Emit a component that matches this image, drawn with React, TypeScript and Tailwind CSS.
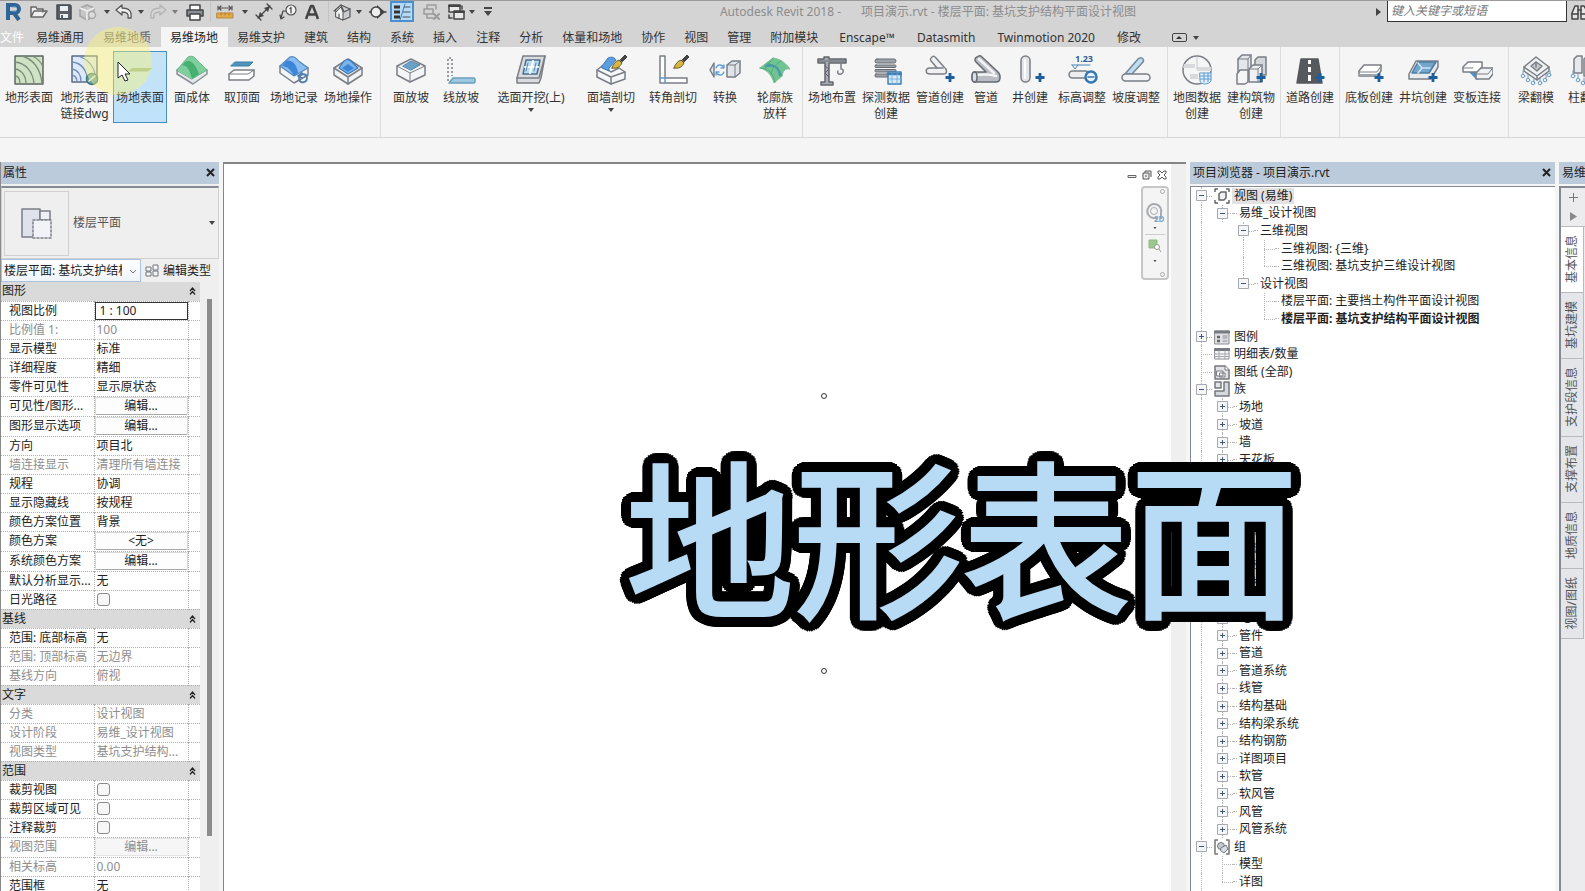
import type { ReactNode } from "react";
import clsx from "clsx";

type TreeRow = {
  level: number;
  label: string;
  state?: "open" | "closed";
  icon?: ReactNode;
  bold?: boolean;
  selected?: boolean;
  last?: boolean;
  rails?: number[];
};

type PropRow = {
  label: string;
  value?: string;
  kind?: "text" | "button" | "check" | "input";
  muted?: boolean;
};

const Svg = ({ size = 32, children }: { size?: number; children: ReactNode }) => (
  <svg
    width={size}
    height={size}
    viewBox={`0 0 ${size} ${size}`}
    fill="none"
    stroke="#7a7f86"
    strokeWidth="1.500"
    strokeLinejoin="round"
    strokeLinecap="round"
    className="shrink-0"
  >
    {children}
  </svg>
);

const Plus = () => (
  <path d="M26 19v9M21.500 23.500h9" stroke="#1d5f9c" strokeWidth="2.800" strokeLinecap="butt" />
);

const Brush = () => (
  <g strokeWidth="1">
    <path d="M17 14c1-4 4-7 7-8l3 3c-2 4-5 6-10 5z" fill="#d9b544" stroke="#6d5c22" />
    <path d="M25 6l5-5 2 2-5 5z" fill="#444" stroke="#444" />
  </g>
);

/* ribbon icons, 32px grid */

const TerrainIcon = () => (
  <Svg>
    <path d="M2 2h28v28H2z" fill="#cfe3c4" stroke="#5d6660" />
    <path d="M9 2c11 3 19 13 20 28M2 8c11 1 18 10 19 22M2 15c7 1 11 7 11 15M2 22c4 0 5 4 5 8M19 2c5 2 9 6 11 11" stroke="#7c8b7a" strokeWidth="1.300" />
  </Svg>
);

const TerrainLinkIcon = () => (
  <Svg>
    <path d="M3 2h25v26H3z" fill="#dbe9fa" stroke="#5d6a80" />
    <path d="M9 2c10 3 17 11 18 24M3 8c10 1 15 9 16 20M3 15c6 1 9 6 9 13M3 21c4 1 5 4 5 7" stroke="#728bb5" strokeWidth="1.300" />
    <circle cx="23" cy="25" r="5.500" fill="#66a0a8" stroke="#3f7780" />
    <path d="M20 27l6-5" stroke="#e4f3f3" />
  </Svg>
);

const SiteSurfaceIcon = () => (
  <Svg>
    <path d="M4 17.500h20l4-3.500H8z" fill="#8fb495" stroke="none" />
  </Svg>
);

const SolidIcon = () => (
  <Svg>
    <path d="M1 16l15-9 15 9v4L17 30 1 20z" fill="#e6e8ea" stroke="#8a9095" />
    <path d="M1 16L12 3c6-3 8 3 13 7l6 6-15 9z" fill="#7fcf9c" stroke="#6bb78a" strokeWidth="1" />
    <path d="M9 8c5-3 10 1 14 12l-7 5C13 15 12 12 6 11z" fill="#46b072" stroke="none" />
  </Svg>
);

const TopFaceIcon = () => (
  <Svg>
    <path d="M5 12h18l4-4H9z" fill="#4f93bb" stroke="#3b7ea6" strokeWidth="1" />
    <path d="M3 20l5-4h20v6l-5 4H3z" fill="#fff" />
    <path d="M3 20h19l6-4" fill="none" strokeWidth="1" />
  </Svg>
);

const SiteLogIcon = () => (
  <Svg>
    <path d="M2 12v7l14 10 14-8v-7L16 6z" fill="#f3f5f7" />
    <path d="M2 12L12 3c6-2 6 3 10 5l8 6-14 8z" fill="#8cbdf0" stroke="#5487bb" strokeWidth="1.200" />
    <path d="M8 7c6-2 11 4 12 12l-4 3C12 15 10 13 4 12z" fill="#3c86d8" stroke="none" />
    <path d="M21 24c1-5 8-5 8 0s-7 6-8 1M24 19l-4 3 4 2" stroke="#4f7fae" strokeWidth="1.800" />
  </Svg>
);

const SiteOpIcon = () => (
  <Svg>
    <path d="M2 14l14-9 14 9v7l-14 9-14-9z" fill="#f1f3f5" />
    <path d="M2 14l14 9 14-9M16 23v7" />
    <path d="M7 14l5-7c4-3 6-1 8 1l6 6-10 6z" fill="#7cb5ee" stroke="#3c77b5" strokeWidth="1.200" />
    <path d="M10 14l6-4 6 4-6 4z" fill="#3c86d8" stroke="none" />
  </Svg>
);

const FaceSlopeIcon = () => (
  <Svg>
    <path d="M2 12l14-7 14 7v9l-15 7-13-7z" fill="#f4f5f7" />
    <path d="M2 12l13 7 15-7M15 19v9" strokeWidth="1" />
    <path d="M8 12l8-5 9 4-9 5z" fill="#6ba3c8" stroke="#5282a3" strokeWidth="1" />
  </Svg>
);

const LineSlopeIcon = () => (
  <Svg>
    <path d="M3 27V4h4v18" strokeDasharray="2 2" strokeLinecap="butt" />
    <path d="M4 29l4-5h21l1 1v3l-1 1z" fill="#9dc9df" stroke="#6a9fbd" />
  </Svg>
);

const ExcavateIcon = () => (
  <Svg>
    <path d="M8 2h22l-4 22-2 5H2v-5z" fill="#d9dbde" />
    <path d="M2 24h22l6-22" />
    <path d="M11 6h14l-3 14H8z" fill="#b9dcf0" stroke="#4d6f8c" />
    <path d="M18 7l-3 12M10 13h13" stroke="#fff" strokeWidth="2" />
    <path d="M13 9l-2 8M21 9l-2 8" stroke="#4d88b5" strokeWidth="1" />
  </Svg>
);

const WallCutIcon = () => (
  <Svg>
    <path d="M2 16l5-4 9 6 8-4 6 4v7l-14 5-14-7z" fill="#f6f7f9" />
    <path d="M7 12l6-8c4-2 7 0 8 2l-7 8v3l-7-3z" fill="#5a9ee0" stroke="#3c77b5" strokeWidth="1" />
    <path d="M2 16l14 7 14-5M16 23v7" />
    <Brush />
  </Svg>
);

const CornerCutIcon = () => (
  <Svg>
    <path d="M3 2h5v22h22v5H3z" fill="#fff" />
    <path d="M8 24H3M8 24v5" stroke="#5c9bd6" />
    <Brush />
  </Svg>
);

const ConvertIcon = () => (
  <Svg>
    <path d="M5 9L1 16l4 7z" fill="#e3e6ea" />
    <path d="M7 14c2-5 7-3 8 0M15 18c-2 5-7 3-8 0M15 11v3h-3M7 21v-3h3" stroke="#5d9edb" strokeWidth="1.300" />
    <path d="M18 11l5-4h8v12l-5 4h-8z" fill="#e1e4e9" />
    <path d="M18 11h8v12M26 11l5-4" strokeWidth="1" />
  </Svg>
);

const LoftIcon = () => (
  <Svg>
    <path d="M1 14L14 4c6 1 11 3 17 11-5-1-7 2-8 7l-8 7C13 22 9 16 1 14z" fill="#6fc492" stroke="#7dbf97" strokeWidth="1" />
    <path d="M2 14c8 1 12 5 14 14M8 9c8 2 13 6 15 13M14 4c-2 5-7 5-8 11M22 7c-6 4-9 7-10 13" stroke="#4fae79" strokeWidth="1" />
    <path d="M7 12c7-2 13 1 14 9" stroke="#4c9aa8" strokeWidth="2.500" />
  </Svg>
);

const CraneIcon = () => (
  <Svg>
    <path d="M2 5h6V3h5v2h17v4H13v19h4v3H5v-3h4V9H2z" fill="#a8adb3" stroke="#61666c" />
    <path d="M9 12l4 3-4 4 4 4M3 7h26" stroke="#61666c" strokeWidth="1" />
    <path d="M25 9v6c3 0 3 4 0 5s-4-2-3-3" />
  </Svg>
);

const DetectIcon = () => (
  <Svg>
    <g fill="#9ea3a9" stroke="#676c72" strokeWidth="1">
      <rect x="5" y="5" width="21" height="4" rx="2" />
      <rect x="5" y="11" width="21" height="2.500" rx="1" />
      <rect x="5" y="15.500" width="21" height="2.500" rx="1" />
      <rect x="5" y="20" width="16" height="3" rx="1" />
    </g>
    <path d="M18 18h13v12H18z" fill="#d7ebfb" stroke="#3f7fb5" />
    <path d="M18 20h13" stroke="#3f7fb5" strokeWidth="2.500" />
    <path d="M18 25h13M22 20v10M27 20v10" stroke="#7ab1dd" strokeWidth="1" />
  </Svg>
);

const PipeAddIcon = () => (
  <Svg>
    <path d="M8 3c-3 2-1 4 0 5l5 6H6c-5 0-5 6 0 6h13c5 0 4-5 1-7L12 4c-1-2-3-2-4-1z" fill="#eff0f2" />
    <path d="M13 14h6" />
    <Plus />
  </Svg>
);

const PipeIcon = () => (
  <Svg>
    <path d="M7 3c-3 1-2 4-1 5l10 10H5c-4 0-4 10 0 10h21c5 0 5-7 2-10L12 3c-2-2-4-1-5 0z" fill="#b9bdc3" stroke="#666b72" />
    <path d="M6 21c9-1 14-1 20 1M9 5l15 14" stroke="#f4f4f6" strokeWidth="2.500" />
    <ellipse cx="4.500" cy="23" rx="2.500" ry="5" fill="#dcdfe3" stroke="#666b72" />
  </Svg>
);

const WellAddIcon = () => (
  <Svg>
    <rect x="7" y="2" width="9" height="26" rx="4.500" fill="#e3e5e8" />
    <path d="M11 6v18" stroke="#fff" strokeWidth="2" />
    <Plus />
  </Svg>
);

const LevelIcon = () => (
  <Svg>
    <text x="9" y="8" fontSize="9" fontWeight="700" fill="#2c5f99" stroke="none" className="font-['Noto_Sans']">
      1.23
    </text>
    <path d="M6 11h18M6 11l3 4 3-4" stroke="#4a83b8" strokeWidth="1" />
    <rect x="3" y="17" width="20" height="7" rx="3.500" fill="#eceef0" />
    <circle cx="25" cy="23" r="5.500" fill="#e8f2fb" stroke="#3877b2" strokeWidth="2.500" />
    <path d="M22 23h6" stroke="#3877b2" />
  </Svg>
);

const SlopeAdjustIcon = () => (
  <Svg>
    <path d="M5 20L18 5c3-3 7 0 5 3L12 20z" fill="#bfdcf0" stroke="#73899d" />
    <rect x="2" y="20" width="28" height="7" rx="3.500" fill="#f3f4f6" />
  </Svg>
);

const MapDataIcon = () => (
  <Svg>
    <circle cx="16" cy="16" r="14" fill="#f6f6f6" />
    <path d="M3 10h11v4H2zM16 13h14v4H16zM9 20h8v5H9z" fill="#d9dadc" stroke="none" />
    <path d="M16 3v12" stroke="#c4c6c9" strokeWidth="1" />
    <path d="M19 19h11v8c-2 4-11 4-11 0z" fill="#e2f0fc" stroke="#5e9bd1" strokeWidth="1" />
    <path d="M19 22h11M19 25h11M23 19v9M27 19v9" stroke="#5e9bd1" strokeWidth="1" />
  </Svg>
);

const BuildingIcon = () => (
  <Svg>
    <path d="M3 5l4-4h9v22H3z" fill="#e4e6e9" />
    <path d="M3 5h10l3-4M13 5v15" strokeWidth="1" />
    <path d="M20 6l3-3h8v18h-11z" fill="#d3d6da" />
    <path d="M2 20l3-4h8v12l-3 2H2z" fill="#f4f5f6" />
    <path d="M14 15l4-4h9v17H14z" fill="#eef0f2" />
    <path d="M14 15h9l4-4M23 15v13" strokeWidth="1" />
    <Plus />
  </Svg>
);

const RoadIcon = () => (
  <Svg>
    <path d="M7 5h17l4 24H3z" fill="#55585c" stroke="#55585c" />
    <path d="M15.500 6v4M15.500 13v5M15.500 21v6" stroke="#fff" strokeWidth="3" strokeLinecap="butt" />
    <Plus />
  </Svg>
);

const SlabIcon = () => (
  <Svg>
    <path d="M6 17l5-6h17v6l-4 5H6z" fill="#fff" />
    <path d="M6 18h18l4-6" strokeWidth="1" />
    <path d="M6 20h18v2H6z" fill="#9ea3a8" stroke="none" />
    <Plus />
  </Svg>
);

const PitIcon = () => (
  <Svg>
    <path d="M2 20L9 7h22v6l-7 12H2z" fill="#e9ebee" />
    <path d="M5 19L11 8h18l-7 11z" fill="#73a6cd" stroke="#4e7da0" />
    <path d="M11 9l4 5h8M15 14l-4 5" stroke="#cfe5f5" />
    <Plus />
  </Svg>
);

const SlabJoinIcon = () => (
  <Svg>
    <path d="M9 18l7 7v-9z" fill="#4f91c4" stroke="#4f91c4" />
    <path d="M2 13l5-5h14v5l-4 5H2z" fill="#fff" />
    <path d="M15 19l5-5h12v6l-4 5H15z" fill="#f1f2f4" />
    <path d="M15 20h12l4-5M2 14h10" strokeWidth="1" />
  </Svg>
);

const Bolts = () => (
  <g stroke="#6c9ac0" strokeWidth="1" fill="#eaf3fb">
    <path d="M3 17v4M8 20v4M14 24v4M20 24v4M26 20v4M30 17v4" />
    <circle cx="3" cy="22" r="1.800" />
    <circle cx="8" cy="26" r="1.800" />
    <circle cx="13" cy="29" r="1.800" />
    <circle cx="20" cy="29" r="1.800" />
    <circle cx="25" cy="26" r="1.800" />
    <circle cx="29" cy="21" r="1.800" />
  </g>
);

const BeamIcon = () => (
  <Svg>
    <Bolts />
    <path d="M4 13L16 3l13 10v4L17 26 4 17z" fill="#eff1f3" />
    <path d="M4 13l13 9 12-9M17 22v4" />
    <path d="M11 12l5-4 6 4-5 5z" fill="#c4c8cd" />
    <path d="M16 8v5" />
  </Svg>
);

const ColumnIcon = () => (
  <Svg>
    <Bolts />
    <path d="M4 5l3-3h5v17H4zM14 5l3-3h8v20H14z" fill="#e6e8eb" />
  </Svg>
);

/* quick access toolbar icons, 18px grid */

const LogoIcon = () => (
  <Svg size={20}>
    <path d="M5 18V3h7a3.500 3.500 0 0 1 0 8H6M11 11l5 7" stroke="#2f6496" strokeWidth="4" strokeLinecap="butt" strokeLinejoin="miter" />
    <path d="M9 5h4M9 9h4" stroke="#6fa2cc" strokeWidth="1" />
  </Svg>
);

const FolderIcon = () => (
  <Svg size={18}>
    <path d="M1 14V4h5l1 2h6v3M1 14l3-6h13l-4 6z" fill="#f0f0f0" stroke="#666" />
  </Svg>
);

const SaveIcon = () => (
  <Svg size={18}>
    <path d="M2 2h13l1 1v13H2z" fill="#5a5e66" stroke="#44484f" />
    <path d="M5 3h8v5H5zM5 11h8v4H5z" fill="#eceef0" stroke="none" />
    <path d="M6 12h2v3H6z" fill="#5a5e66" stroke="none" />
  </Svg>
);

const SyncIcon = () => (
  <Svg size={18}>
    <path d="M1 5l7-3 7 3v8l-7 4-7-4z" fill="#c6c6c6" stroke="#a5a5a5" />
    <path d="M1 5l7 3 7-3M8 8v9" stroke="#eee" />
    <circle cx="13" cy="12" r="3.500" fill="#dcdcdc" stroke="#aaa" />
  </Svg>
);

const UndoIcon = ({ flip = false }: { flip?: boolean }) => (
  <Svg size={18}>
    <g transform={flip ? "translate(18 0) scale(-1 1)" : undefined}>
      <path
        d="M1 7l6-5v3c7 0 10 3 9 10h-3c1-4-1-6-6-6v3z"
        fill={flip ? "#d4d4d4" : "#eee"}
        stroke={flip ? "#b3b3b3" : "#555"}
        strokeWidth="1.300"
      />
    </g>
  </Svg>
);

const PrintIcon = () => (
  <Svg size={18}>
    <path d="M4 7V2h10v5" fill="#fff" stroke="#444" />
    <path d="M1 7h16v6H1z" fill="#8c9096" stroke="#444" />
    <path d="M4 11h10v6H4z" fill="#fff" stroke="#444" />
  </Svg>
);

const MeasureIcon = () => (
  <Svg size={18}>
    <path d="M2 5h14M2 3v4M16 3v4M5 3L3 5l2 2M13 3l2 2-2 2" stroke="#555" strokeWidth="1.200" />
    <path d="M1 10h16v5H1z" fill="#e2a94b" stroke="#b98a3e" strokeWidth="1" />
    <path d="M5 10v2M9 10v2M13 10v2" stroke="#b07c2c" strokeWidth="1" />
  </Svg>
);

const DimIcon = () => (
  <Svg size={18}>
    <path d="M3 15L15 3M1 12l5 5M12 1l5 5" stroke="#444" strokeWidth="1.300" />
    <path d="M3 15l2-6 4 4zM15 3l-2 6-4-4z" fill="#444" stroke="none" />
  </Svg>
);

const TagIcon = () => (
  <Svg size={18}>
    <circle cx="12" cy="7" r="5" fill="#f3f3f3" stroke="#555" strokeWidth="1.200" />
    <path d="M7 8H4l-2 7M1 12l1 4 3-2M11 5.500l1-1V10" stroke="#444" strokeWidth="1.200" />
  </Svg>
);

const TextIcon = () => (
  <Svg size={18}>
    <path d="M3 16L8 3h2l5 13M5.500 11.500h7" stroke="#444" strokeWidth="2.500" strokeLinecap="butt" />
  </Svg>
);

const HouseIcon = () => (
  <Svg size={18}>
    <path d="M1 8l7-6 9 4v8l-7 3-7-3V8z" fill="#c9ccd0" stroke="#555" strokeWidth="1.200" />
    <path d="M3 9l5-5 2 5v8l-7-3z" fill="#f1f2f3" stroke="#555" strokeWidth="1" />
    <path d="M8 2l3 7 6-3M6 15v-4" stroke="#555" strokeWidth="1.200" />
  </Svg>
);

const SectionIcon = () => (
  <Svg size={18}>
    <path d="M8 2l8 7-8 7z" fill="#444" stroke="none" />
    <circle cx="7" cy="9" r="5" fill="#eee" stroke="#444" />
    <path d="M0 9h2M12 9h5" stroke="#444" />
  </Svg>
);

const ThinLinesIcon = () => (
  <Svg size={18}>
    <path d="M1 4h6M1 9h6M1 14h6" stroke="#333" strokeWidth="3" strokeLinecap="butt" />
    <path d="M11 4h6M10 9h7M10 14h7" stroke="#47525e" strokeWidth="1" />
    <path d="M12 1L7 17" stroke="#4a7eb0" strokeWidth="1" />
  </Svg>
);

const CloseHiddenIcon = () => (
  <Svg size={18}>
    <path d="M4 6V2h9v4M1 6h9v5H1zM4 11v4h6" stroke="#9b9b9b" />
    <path d="M11 11l5 5M16 11l-5 5" stroke="#9b9b9b" strokeWidth="2" />
  </Svg>
);

const SwitchIcon = () => (
  <Svg size={18}>
    <path d="M2 2h11v7H2z" fill="#e9e9e9" stroke="#444" />
    <path d="M7 8h10v8H7z" fill="#e9e9e9" stroke="#444" />
    <path d="M7 9h10M2 3h11" stroke="#444" strokeWidth="2" />
    <path d="M2 12v3h3M15 3v3" stroke="#444" />
  </Svg>
);

const Arrow = ({ className = "" }: { className?: string }) => (
  <span className={clsx("block size-0 shrink-0 border-x-[3px] border-t-4 border-x-transparent border-t-[#444]", className)} />
);

const qat: { name: string; width: string; icon: ReactNode }[] = [
  { name: "Revit", width: "w-[26px]", icon: <LogoIcon /> },
  { name: "打开", width: "w-[26px]", icon: <FolderIcon /> },
  { name: "保存", width: "w-6", icon: <SaveIcon /> },
  { name: "同步", width: "w-6", icon: <SyncIcon /> },
  { name: "同步选项", width: "w-3.5", icon: <Arrow /> },
  { name: "放弃", width: "w-5", icon: <UndoIcon /> },
  { name: "放弃列表", width: "w-3.5", icon: <Arrow /> },
  { name: "重做", width: "w-5", icon: <UndoIcon flip /> },
  { name: "重做列表", width: "w-3.5", icon: <Arrow className="opacity-60" /> },
  { name: "打印", width: "w-[26px]", icon: <PrintIcon /> },
  { name: "|", width: "w-1", icon: null },
  { name: "测量", width: "w-[26px]", icon: <MeasureIcon /> },
  { name: "测量选项", width: "w-3.5", icon: <Arrow /> },
  { name: "对齐尺寸", width: "w-6", icon: <DimIcon /> },
  { name: "按类别标记", width: "w-6", icon: <TagIcon /> },
  { name: "文字", width: "w-6", icon: <TextIcon /> },
  { name: "|", width: "w-2", icon: null },
  { name: "三维视图", width: "w-5", icon: <HouseIcon /> },
  { name: "三维视图选项", width: "w-3.5", icon: <Arrow /> },
  { name: "剖面", width: "w-6", icon: <SectionIcon /> },
];

const tabs = [
  "易维通用", "易维地质", "易维场地", "易维支护", "建筑", "结构", "系统", "插入",
  "注释", "分析", "体量和场地", "协作", "视图", "管理", "附加模块",
];

const addinTabs = ["Enscape™", "Datasmith", "Twinmotion 2020", "修改"];

type Tool = { label: string; icon: ReactNode; width: string; active?: boolean; menu?: boolean };

const ribbon: { tools: Tool[]; className: string }[] = [
  {
    className: "pl-0.5 pr-[5px]",
    tools: [
      { label: "地形表面", icon: <TerrainIcon />, width: "w-[54px]" },
      { label: "地形表面 链接dwg", icon: <TerrainLinkIcon />, width: "w-[57px]" },
      { label: "场地表面", icon: <SiteSurfaceIcon />, width: "w-[54px]", active: true },
      { label: "面成体", icon: <SolidIcon />, width: "w-[50px]" },
      { label: "取顶面", icon: <TopFaceIcon />, width: "w-[50px]" },
      { label: "场地记录", icon: <SiteLogIcon />, width: "w-[54px]" },
      { label: "场地操作", icon: <SiteOpIcon />, width: "w-[54px]" },
    ],
  },
  {
    className: "pl-[5px] pr-0.5",
    tools: [
      { label: "面放坡", icon: <FaceSlopeIcon />, width: "w-[50px]" },
      { label: "线放坡", icon: <LineSlopeIcon />, width: "w-[50px]" },
      { label: "选面开挖(上)", icon: <ExcavateIcon />, width: "w-[90px]", menu: true },
      { label: "面墙剖切", icon: <WallCutIcon />, width: "w-[70px]", menu: true },
      { label: "转角剖切", icon: <CornerCutIcon />, width: "w-[54px]" },
      { label: "转换", icon: <ConvertIcon />, width: "w-[50px]" },
      { label: "轮廓族 放样", icon: <LoftIcon />, width: "w-[50px]" },
    ],
  },
  {
    className: "pl-0.5 pr-1",
    tools: [
      { label: "场地布置", icon: <CraneIcon />, width: "w-[54px]" },
      { label: "探测数据 创建", icon: <DetectIcon />, width: "w-[54px]" },
      { label: "管道创建", icon: <PipeAddIcon />, width: "w-[54px]" },
      { label: "管道", icon: <PipeIcon />, width: "w-[38px]" },
      { label: "井创建", icon: <WellAddIcon />, width: "w-[50px]" },
      { label: "标高调整", icon: <LevelIcon />, width: "w-[54px]" },
      { label: "坡度调整", icon: <SlopeAdjustIcon />, width: "w-[54px]" },
    ],
  },
  {
    className: "px-0.5",
    tools: [
      { label: "地图数据 创建", icon: <MapDataIcon />, width: "w-[54px]" },
      { label: "建构筑物 创建", icon: <BuildingIcon />, width: "w-[54px]" },
    ],
  },
  {
    className: "px-0.5",
    tools: [{ label: "道路创建", icon: <RoadIcon />, width: "w-[54px]" }],
  },
  {
    className: "pl-0.5 pr-1",
    tools: [
      { label: "底板创建", icon: <SlabIcon />, width: "w-[54px]" },
      { label: "井坑创建", icon: <PitIcon />, width: "w-[54px]" },
      { label: "变板连接", icon: <SlabJoinIcon />, width: "w-[54px]" },
    ],
  },
  {
    className: "px-0.5",
    tools: [
      { label: "梁翻模", icon: <BeamIcon />, width: "w-[50px]" },
      { label: "柱翻模", icon: <ColumnIcon />, width: "w-[50px]" },
    ],
  },
];

const propGroups: { title: string; rows: PropRow[] }[] = [
  {
    title: "图形",
    rows: [
      { label: "视图比例", value: "1 : 100", kind: "input" },
      { label: "比例值 1:", value: "100", muted: true },
      { label: "显示模型", value: "标准" },
      { label: "详细程度", value: "精细" },
      { label: "零件可见性", value: "显示原状态" },
      { label: "可见性/图形...", value: "编辑...", kind: "button" },
      { label: "图形显示选项", value: "编辑...", kind: "button" },
      { label: "方向", value: "项目北" },
      { label: "墙连接显示", value: "清理所有墙连接", muted: true },
      { label: "规程", value: "协调" },
      { label: "显示隐藏线", value: "按规程" },
      { label: "颜色方案位置", value: "背景" },
      { label: "颜色方案", value: "<无>", kind: "button" },
      { label: "系统颜色方案", value: "编辑...", kind: "button" },
      { label: "默认分析显示...", value: "无" },
      { label: "日光路径", kind: "check" },
    ],
  },
  {
    title: "基线",
    rows: [
      { label: "范围: 底部标高", value: "无" },
      { label: "范围: 顶部标高", value: "无边界", muted: true },
      { label: "基线方向", value: "俯视", muted: true },
    ],
  },
  {
    title: "文字",
    rows: [
      { label: "分类", value: "设计视图", muted: true },
      { label: "设计阶段", value: "易维_设计视图", muted: true },
      { label: "视图类型", value: "基坑支护结构...", muted: true },
    ],
  },
  {
    title: "范围",
    rows: [
      { label: "裁剪视图", kind: "check" },
      { label: "裁剪区域可见", kind: "check" },
      { label: "注释裁剪", kind: "check" },
      { label: "视图范围", value: "编辑...", kind: "button", muted: true },
      { label: "相关标高", value: "0.00", muted: true },
      { label: "范围框", value: "无" },
    ],
  },
];

const ViewsIcon = () => (
  <Svg size={16}>
    <path d="M1 4V1h3M12 1h3v3M15 12v3h-3M4 15H1v-3" stroke="#666" strokeLinecap="butt" />
    <path d="M5 6l2-2h5v6l-2 2H5z" fill="#eef0f3" stroke="#666" />
  </Svg>
);

const LegendIcon = () => (
  <Svg size={16}>
    <path d="M1 2h14v13H1z" fill="#dfe1e5" stroke="#8a8d92" strokeWidth="1" />
    <path d="M1 3h14" stroke="#777b82" strokeWidth="3" />
    <path d="M3 8h3M3 12h3" stroke="#666" strokeWidth="2.500" strokeLinecap="butt" />
    <path d="M9 7h4M9 9h4M9 12h4" stroke="#8a8d92" strokeWidth="1" />
  </Svg>
);

const ScheduleIcon = () => (
  <Svg size={16}>
    <path d="M1 3h14v10H1z" fill="#f4f5f7" stroke="#8a8d92" strokeWidth="1" />
    <path d="M1 3.500h14" stroke="#777b82" strokeWidth="3" />
    <path d="M1 8h14M1 10.500h14M5 5v8M11 5v8" stroke="#a6a9ae" strokeWidth="1" />
  </Svg>
);

const SheetIcon = () => (
  <Svg size={16}>
    <path d="M1 2h10l4 4v9H1z" fill="#e1e4e9" stroke="#74787f" />
    <path d="M11 2v4h4M3 7h6v5H3zM6 9h5v4H6z" fill="#fff" stroke="#74787f" strokeWidth="1" />
  </Svg>
);

const FamilyIcon = () => (
  <Svg size={16}>
    <path d="M1 1h6v6H1z" fill="#e1e4e9" stroke="#74787f" />
    <path d="M10 1h5v14H1v-5h9z" fill="#d5d9e0" stroke="#74787f" />
  </Svg>
);

const GroupIcon = () => (
  <Svg size={16}>
    <path d="M4 1H1v14h3M12 1h3v14h-3" stroke="#777" strokeLinecap="butt" />
    <circle cx="7" cy="7" r="3.500" fill="#c6cad0" stroke="#74787f" strokeWidth="1" />
    <path d="M7 9l5-3 2 4-4 4-3-2z" fill="#d9dce1" stroke="#74787f" strokeWidth="1" />
  </Svg>
);

const families = [
  "场地", "坡道", "墙", "天花板", "屋顶", "常规模型", "幕墙嵌板", "幕墙竖梃", "楼板",
  "楼梯", "栏杆扶手", "注释符号", "电气", "管件", "管道", "管道系统", "线管", "结构基础",
  "结构梁系统", "结构钢筋", "详图项目", "软管", "软风管", "风管", "风管系统",
];

const tree: TreeRow[] = [
  { level: 0, label: "视图 (易维)", state: "open", icon: <ViewsIcon />, selected: true },
  { level: 1, label: "易维_设计视图", state: "open", rails: [0] },
  { level: 2, label: "三维视图", state: "open", rails: [0] },
  { level: 3, label: "三维视图: {三维}", rails: [0, 2] },
  { level: 3, label: "三维视图: 基坑支护三维设计视图", rails: [0, 2], last: true },
  { level: 2, label: "设计视图", state: "open", rails: [0], last: true },
  { level: 3, label: "楼层平面: 主要挡土构件平面设计视图", rails: [0] },
  { level: 3, label: "楼层平面: 基坑支护结构平面设计视图", rails: [0], bold: true, last: true },
  { level: 0, label: "图例", state: "closed", icon: <LegendIcon /> },
  { level: 0, label: "明细表/数量", icon: <ScheduleIcon /> },
  { level: 0, label: "图纸 (全部)", icon: <SheetIcon /> },
  { level: 0, label: "族", state: "open", icon: <FamilyIcon /> },
  ...families.map((label): TreeRow => ({ level: 1, label, state: "closed", rails: [0] })),
  { level: 0, label: "组", state: "open", icon: <GroupIcon /> },
  { level: 1, label: "模型", rails: [0] },
  { level: 1, label: "详图", rails: [0], last: true },
];

const sideTabs = [
  { label: "基本信息", height: "h-[66px]" },
  { label: "基坑建模", height: "h-[66px]" },
  { label: "支护段信息", height: "h-[78px]" },
  { label: "支撑布置", height: "h-[66px]" },
  { label: "地质信息", height: "h-[66px]" },
  { label: "视图/图纸", height: "h-[70px]" },
];

// two rings of hard shadows add up to a round-cornered outline
const outline = [7, 12]
  .flatMap((radius) =>
    Array.from({ length: 32 }, (_, i) => {
      const angle = (i / 32) * 2 * Math.PI;
      return `${(radius * Math.cos(angle)).toFixed(1)}px ${(radius * Math.sin(angle)).toFixed(1)}px 0 #000`;
    }),
  )
  .join(", ");

function TitleBar() {
  return (
    <header className="flex h-[27px] shrink-0 items-start border-t border-[#9a9a9a] bg-[#d4d4d4]">
      <div className="flex h-[21px] shrink-0 items-center">
        {qat.map((item, i) =>
          item.icon ? (
            <button key={i} aria-label={item.name} className={clsx("flex h-full items-center justify-center", item.width)}>
              {item.icon}
            </button>
          ) : (
            <span key={i} className={clsx("flex h-full justify-center", item.width)}>
              <span className="w-px bg-[#c4c4c4]" />
            </span>
          ),
        )}
        <button aria-label="细线" className="flex h-[21px] w-6 items-center justify-center border-2 border-[#4a90cf] bg-[#b5d9f5]">
          <ThinLinesIcon />
        </button>
        <button aria-label="关闭隐藏窗口" className="ml-1.5 flex w-6 justify-center"><CloseHiddenIcon /></button>
        <button aria-label="切换窗口" className="flex w-6 justify-center"><SwitchIcon /></button>
        <button aria-label="窗口列表" className="flex w-2 justify-center"><Arrow /></button>
        <button aria-label="自定义快速访问工具栏" className="flex w-6 flex-col items-center gap-0.5">
          <span className="h-0.5 w-2 bg-[#444]" />
          <span className="block size-0 border-x-4 border-t-[5px] border-x-transparent border-t-[#444]" />
        </button>
      </div>
      <h1 className="flex-1 truncate pt-[3px] text-center text-xs leading-4 text-[#8c8c8c]">
        Autodesk Revit 2018 -<span className="pl-5">项目演示.rvt - 楼层平面: 基坑支护结构平面设计视图</span>
      </h1>
      <div className="ml-5 flex shrink-0 items-center">
        <span className="mr-1.5 block size-0 border-y-4 border-l-[5px] border-y-transparent border-l-[#444]" />
        <input
          aria-label="搜索"
          placeholder="键入关键字或短语"
          className="h-[21px] w-[180px] border border-t-0 border-[#333] bg-white px-[3px] pb-0.5 text-xs italic placeholder:text-[#777]"
        />
        <button aria-label="查找" className="ml-1 w-3.5 overflow-hidden">
          <Svg size={18}>
            <path d="M1 10L4 3h3v13H1zM10 3h3l4 7v6h-7z" fill="#e6e6e6" stroke="#444" />
            <path d="M7 7h3M1 11h6M10 11h7" stroke="#444" />
          </Svg>
        </button>
      </div>
    </header>
  );
}

function TabBar() {
  return (
    <nav className="flex h-5 shrink-0 items-start bg-[#d4d4d4] text-xs leading-5 whitespace-nowrap">
      <button className="h-5 w-[27px] pt-px text-left text-white">文件</button>
      {tabs.map((tab) => (
        <button
          key={tab}
          className={clsx(
            "h-5 pt-px pr-2.5 pl-[9px]",
            tab === "易维场地" && "bg-[#f5f5f5] text-[#222]",
            tab === "易维地质" && "text-[#666]",
          )}
        >
          {tab}
        </button>
      ))}
      {addinTabs.map((tab) => (
        <button key={tab} className="h-5 px-[11px] pt-px">
          {tab}
        </button>
      ))}
      <button aria-label="最小化面板" className="ml-5 flex h-5 items-center gap-1.5 pt-px">
        <span className="flex h-[9px] w-[15px] items-center justify-center rounded-xs border border-[#444]">
          <span className="block size-0 border-x-[3px] border-b-[3px] border-x-transparent border-b-[#333]" />
        </span>
        <Arrow />
      </button>
    </nav>
  );
}

function Ribbon() {
  return (
    <div className="flex h-[91px] shrink-0 overflow-hidden border-b border-[#d8d8d8] bg-[#f5f5f5]">
      {ribbon.map((group, i) => (
        <div key={i} className={clsx("flex shrink-0 items-start border-r border-[#dcdcdc] pt-1", group.className)}>
          {group.tools.map((tool) => (
            <button
              key={tool.label}
              className={clsx(
                "flex h-[72px] shrink-0 flex-col items-center border",
                tool.width,
                tool.active ? "border-[#4a8fc0] bg-linear-to-b from-[#c5e3f5] to-[#bfe2fa]" : "border-transparent",
              )}
            >
              <span className="pt-0.5">{tool.icon}</span>
              <span className="mt-1 flex flex-col text-xs leading-4 whitespace-nowrap">
                {tool.label.split(" ").map((line) => (
                  <span key={line}>{line}</span>
                ))}
              </span>
              {tool.menu && <Arrow className="mt-0.5" />}
            </button>
          ))}
        </div>
      ))}
    </div>
  );
}

function PropValue({ row }: { row: PropRow }) {
  if (row.kind === "input")
    return (
      <input
        aria-label={row.label}
        defaultValue={row.value}
        className="block h-[18px] w-full border border-[#333] bg-white px-1 text-xs leading-4"
      />
    );
  if (row.kind === "button")
    return (
      <button
        disabled={row.muted}
        className="block h-[18px] w-full rounded-xs border border-[#d8d8d8] border-b-[#a8a8a8] bg-[#fdfdfd] text-center leading-4 disabled:border-[#e4e4e4] disabled:bg-[#f6f6f6]"
      >
        {row.value}
      </button>
    );
  if (row.kind === "check")
    return (
      <input
        type="checkbox"
        aria-label={row.label}
        className="ml-0.5 block size-[13px] appearance-none rounded-[3px] border border-[#8a8a8a] bg-[#f7f7f7]"
      />
    );
  return <span className="block overflow-hidden pl-0.5 whitespace-nowrap">{row.value}</span>;
}

function Properties() {
  return (
    <aside className="flex w-[219px] shrink-0 flex-col border-l border-[#8a8a8a] bg-[#efefef]">
      <div className="flex h-[22px] shrink-0 items-center justify-between bg-[#bccbdc] pr-0.5 pl-0.5">
        <h2>属性</h2>
        <CloseButton />
      </div>
      <div className="mt-0.5 flex h-[73px] shrink-0 items-center border border-t-2 border-[#d0d0d0] border-t-[#858a92] pr-[3px] pl-0.5">
        <div className="flex size-[65px] items-center justify-center border border-[#d0d0d0]">
          <Svg>
            <path d="M1 2h18v28H1z" fill="#dfe2ec" />
            <path d="M19 4h10v9H19z" fill="#eef0f5" />
            <path d="M12 13h18v18H12z" fill="#f2f3f6" strokeDasharray="2 2" />
          </Svg>
        </div>
        <span className="flex-1 pl-1 text-[#555]">楼层平面</span>
        <Arrow />
      </div>
      <div className="flex h-[23px] shrink-0 items-center gap-1">
        <div className="relative h-full w-[140px]">
          <select
            aria-label="视图"
            className="h-full w-full appearance-none border border-[#a9c3dc] bg-linear-to-b from-white to-[#eef4fa] pr-[18px] pl-0.5 text-xs"
          >
            <option>楼层平面: 基坑支护结构平面设计视图</option>
          </select>
          <svg width="8" height="5" className="pointer-events-none absolute top-2.5 right-1" fill="none" stroke="#777">
            <path d="M1 1l3 3 3-3" />
          </svg>
        </div>
        <button className="flex items-center gap-1 whitespace-nowrap">
          <svg width="14" height="14" fill="#f3f5f8" stroke="#6e747d">
            <path d="M1 3h5v4H1zM1 8h5v4H1zM8 1h5v5H8zM8 7h5v5H8z" />
          </svg>
          编辑类型
        </button>
      </div>
      <div className="flex min-h-0 flex-1 overflow-hidden">
        <table className="w-[199px] table-fixed border-collapse self-start bg-white leading-4">
          <colgroup>
            <col className="w-[93px]" />
            <col className="w-[94px]" />
            <col />
          </colgroup>
          {propGroups.map((group) => (
            <tbody key={group.title}>
              <tr className="h-[19px] bg-[#dadada]">
                <th colSpan={2} className="pl-px text-left font-normal">{group.title}</th>
                <td>
                  <svg width="7" height="8" fill="none" stroke="#222" strokeWidth="1.200" className="ml-px">
                    <path d="M1 4l2.500-3L6 4M1 7.500l2.500-3 2.500 3" />
                  </svg>
                </td>
              </tr>
              {group.rows.map((row) => (
                <tr
                  key={row.label}
                  className={clsx(
                    "border-y border-dotted border-[#b0b0b0]",
                    row.kind === "button" ? "h-5" : "h-[19px]",
                    row.muted && "text-[#8e8e8e]",
                  )}
                >
                  <td className="overflow-hidden p-0 pl-2 whitespace-nowrap">{row.label}</td>
                  <td className="border-x border-dotted border-[#b0b0b0] p-0"><PropValue row={row} /></td>
                  <td />
                </tr>
              ))}
            </tbody>
          ))}
        </table>
        <div className="flex-1 pt-[17px]">
          <div className="ml-[7px] h-[537px] w-[5px] bg-[#8b8b8b]" />
        </div>
      </div>
    </aside>
  );
}

const CloseButton = () => (
  <button aria-label="关闭" className="flex size-3 items-center justify-center">
    <svg width="10" height="10" stroke="#222" strokeWidth="2">
      <path d="M1 1l7 7M8 1L1 8" />
    </svg>
  </button>
);

function Canvas() {
  return (
    <main className="relative ml-1 flex min-w-0 flex-1 justify-end border-t-2 border-l border-[#858585] bg-white">
      <span className="absolute top-[229px] left-[597px] size-[6px] rounded-full border border-[#333]" />
      <span className="absolute top-[504px] left-[597px] size-[6px] rounded-full border border-[#333]" />
      <div className="flex w-[44px] flex-col items-center pt-1">
        <div className="mb-1 flex h-3.5 items-center gap-[5px]">
          <button aria-label="最小化">
            <svg width="10" height="10" fill="#eee" stroke="#666"><path d="M1 5.500h8v2H1z" /></svg>
          </button>
          <button aria-label="还原">
            <svg width="10" height="10" fill="#eee" stroke="#555"><path d="M3 1h6v6M3 1v2M1 3h6v6H1zM4 5v2" /></svg>
          </button>
          <button aria-label="关闭视图">
            <svg width="10" height="10" fill="none" stroke="#555"><path d="M1 1h2l2 2 2-2h2v2L7 5l2 2v2H7L5 7 3 9H1V7l2-2-2-2z" /></svg>
          </button>
        </div>
        <div className="flex h-[94px] w-7 flex-col items-center self-end rounded border-2 border-[#c6c6c6] bg-[#f4f4f4]">
          <span className="mt-px mr-0.5 size-[5px] self-end rounded-full border border-[#aaa]" />
          <button aria-label="二维控制盘" className="mt-2">
            <svg width="20" height="22" fill="none">
              <path d="M12 16H8a7 7 0 1 1 8-5v6" stroke="#a7abb0" strokeWidth="2" />
              <circle cx="9" cy="9" r="3.500" stroke="#a7abb0" />
              <text x="9" y="20" fontSize="8" fontWeight="700" fill="#7da6cf" className="font-['Noto_Sans']">2D</text>
            </svg>
          </button>
          <Arrow className="mt-0.5 scale-50" />
          <hr className="mt-1 w-5 border-[#ccc]" />
          <button aria-label="区域放大" className="mt-1">
            <svg width="14" height="14" fill="none" stroke="#999">
              <path d="M1 1h8v8H1z" fill="#9cc78e" stroke="#8fb784" />
              <circle cx="9" cy="8" r="2.500" fill="#fff" />
              <path d="M11 10l2 3" />
            </svg>
          </button>
          <Arrow className="mt-1.5 scale-50" />
          <span className="mt-auto mr-0.5 mb-px size-[5px] self-end rounded-full border border-[#aaa]" />
        </div>
      </div>
      <div className="ml-0.5 w-[15px] bg-[#efefef]" />
    </main>
  );
}

function Expander({ state }: { state: "open" | "closed" }) {
  return (
    <svg width="11" height="11" fill="#f5f6f8" stroke="#a5a9b0" className="relative">
      <path d="M.5.500h10v10H.5z" />
      <path d={state === "open" ? "M3 5.500h5" : "M3 5.500h5M5.500 3v5"} stroke="#445580" />
    </svg>
  );
}

function TreeItem({ row }: { row: TreeRow }) {
  return (
    <li className="flex min-h-0 flex-1 items-center whitespace-nowrap">
      {Array.from({ length: row.level }, (_, i) => (
        <span key={i} className="flex w-[21px] shrink-0 justify-center self-stretch">
          {row.rails?.includes(i) && <span className="w-px border-l border-dotted border-[#b5b5b5]" />}
        </span>
      ))}
      <span className="relative flex w-[21px] shrink-0 items-center justify-center self-stretch">
        <span
          className={clsx(
            "absolute top-0 left-[10px] border-l border-dotted border-[#b5b5b5]",
            row.last ? "h-1/2" : "h-full",
          )}
        />
        <span className="absolute top-1/2 right-0 left-[10px] border-t border-dotted border-[#b5b5b5]" />
        {row.state && <Expander state={row.state} />}
      </span>
      {row.icon ? (
        <span className="flex w-5 justify-center">{row.icon}</span>
      ) : (
        <span className="w-1 border-t border-dotted border-[#b5b5b5]" />
      )}
      <span className={clsx("px-0.5 leading-4", row.bold && "font-bold", row.selected && "bg-[#e2e2e2]")}>{row.label}</span>
    </li>
  );
}

function Browser() {
  return (
    <aside className="ml-1 flex w-[365px] shrink-0 flex-col">
      <div className="flex h-[22px] shrink-0 items-center justify-between bg-[#bccbdc] pr-0.5 pl-[3px]">
        <h2>项目浏览器 - 项目演示.rvt</h2>
        <CloseButton />
      </div>
      <ul className="mt-0.5 flex min-h-0 flex-1 flex-col border-t border-l border-[#858a92] bg-white">
        {tree.map((row, i) => (
          <TreeItem key={i} row={row} />
        ))}
      </ul>
    </aside>
  );
}

function SideDock() {
  return (
    <aside className="ml-1 flex w-[26px] shrink-0 flex-col overflow-hidden">
      <h2 className="flex h-[22px] shrink-0 items-center overflow-hidden bg-[#bccbdc] pl-[3px] whitespace-nowrap">易维</h2>
      <div className="mt-0.5 flex flex-1 flex-col border-t-2 border-l-2 border-[#858a92] bg-[#ececee]">
        <div className="flex h-[39px] flex-col items-center justify-around border-b border-[#bbb]">
          <button aria-label="添加">
            <svg width="9" height="9" stroke="#777"><path d="M0 4.500h9M4.500 0v9" /></svg>
          </button>
          <button aria-label="展开">
            <svg width="7" height="9" fill="#888"><path d="M0 0l7 4.500L0 9z" /></svg>
          </button>
        </div>
        {sideTabs.map((tab, i) => (
          <button
            key={tab.label}
            className={clsx(
              "flex w-[23px] items-center justify-center border-r border-b border-[#b8babf]",
              tab.height,
              i === 0 ? "bg-white" : "bg-[#e4e6ea]",
            )}
          >
            <span className="rotate-180 text-xs leading-4 text-[#555] [text-orientation:sideways] [writing-mode:vertical-rl]">
              {tab.label}
            </span>
          </button>
        ))}
      </div>
    </aside>
  );
}

export default function App() {
  return (
    <div className="relative flex h-screen flex-col overflow-hidden bg-[#f5f5f5] font-['Noto_Sans','Noto_Sans_CJK_SC',sans-serif] text-xs text-[#333]">
      <TitleBar />
      <TabBar />
      <Ribbon />
      <div className="mt-6 flex min-h-0 flex-1 text-[#222]">
        <Properties />
        <Canvas />
        <Browser />
        <SideDock />
      </div>
      <div className="pointer-events-none absolute top-[27px] left-[84px] size-[68px] rounded-full bg-[#f8f27a]/45" />
      <svg width="14" height="22" className="pointer-events-none absolute top-[61px] left-[117px]" fill="#fff" stroke="#222">
        <path d="M1 1v16l4-3 3 6 3-1-3-6h5z" />
      </svg>
      <p
        className="pointer-events-none absolute top-[456px] left-[626px] text-[168px] leading-[168px] whitespace-nowrap text-[#b8dbf5] [-webkit-text-stroke:4px_#b8dbf5]"
        style={{ textShadow: outline }}
      >
        地形表面
      </p>
    </div>
  );
}
